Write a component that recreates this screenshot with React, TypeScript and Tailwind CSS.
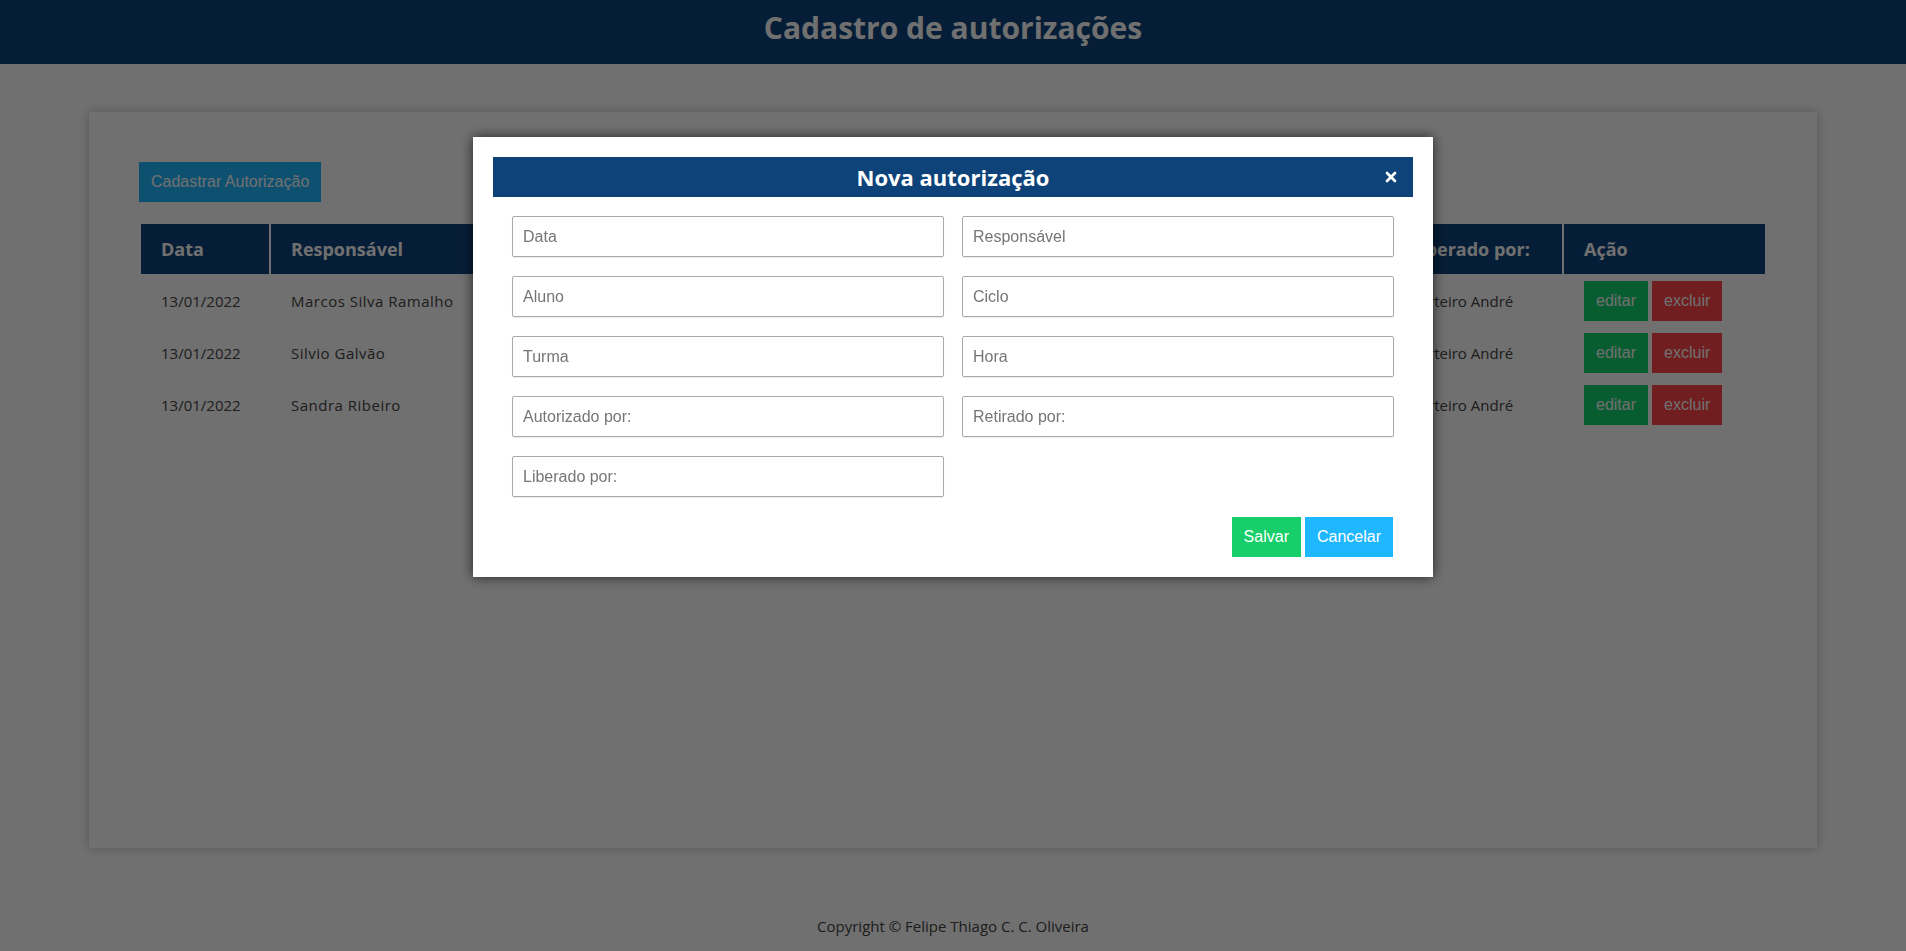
import { X } from "lucide-react";

const rows = [
  { data: "13/01/2022", responsavel: "Marcos Silva Ramalho" },
  { data: "13/01/2022", responsavel: "Silvio Galvão" },
  { data: "13/01/2022", responsavel: "Sandra Ribeiro" },
];

const campos = [
  "Data",
  "Responsável",
  "Aluno",
  "Ciclo",
  "Turma",
  "Hora",
  "Autorizado por:",
  "Retirado por:",
  "Liberado por:",
];

const App: React.FC = () => {
  return (
    <div className="min-h-screen bg-white font-['Open_Sans',sans-serif] text-[#444]">
      {/* Top bar */}
      <header className="h-16 pb-[10px] bg-[#0d437b] flex items-center justify-center">
        <h1 className="text-white text-[30px] font-bold">Cadastro de autorizações</h1>
      </header>

      {/* Card */}
      <main className="mx-[89px] mt-12 h-[736px] bg-white shadow-[0_0_10px_rgba(0,0,0,0.25)] p-[50px]">
        <button className="h-10 px-[12px] bg-[#1fb7ff] text-white text-base font-['Liberation_Sans',sans-serif]">
          Cadastrar Autorização
        </button>

        <table className="w-full mt-5 table-fixed border-separate border-spacing-[2px] text-[15px]">
          <thead>
            <tr className="h-[50px] bg-[#0d437b] text-white text-lg font-bold text-left whitespace-nowrap">
              <th className="w-[128px] pl-5">Data</th>
              <th className="w-[240px] pl-5">Responsável</th>
              <th className="w-[120px] pl-5">Aluno</th>
              <th className="w-[120px] pl-5">Ciclo</th>
              <th className="w-[120px] pl-5">Turma</th>
              <th className="w-[120px] pl-5">Hora</th>
              <th className="pl-5">Autorizado por:</th>
              <th className="pl-5">Retirado por:</th>
              <th className="w-[172px] pl-5">Liberado por:</th>
              <th className="w-[201px] pl-5">Ação</th>
            </tr>
          </thead>
          <tbody>
            {rows.map((r, i) => (
              <tr key={i} className="h-[50px] whitespace-nowrap">
                <td className="pl-5">{r.data}</td>
                <td className="pl-5 tracking-[0.5px]">{r.responsavel}</td>
                <td className="pl-5">João</td>
                <td className="pl-5">1º</td>
                <td className="pl-5">A</td>
                <td className="pl-5">12:00</td>
                <td className="pl-5">Diretora</td>
                <td className="pl-5">Pai</td>
                <td className="pl-5">Porteiro André</td>
                <td className="pl-5">
                  <div className="flex gap-1 font-['Liberation_Sans',sans-serif] text-base">
                    <button className="h-10 px-3 bg-[#14d36d] text-white">editar</button>
                    <button className="h-10 px-3 bg-[#ff4649] text-white">excluir</button>
                  </div>
                </td>
              </tr>
            ))}
          </tbody>
        </table>
      </main>

      <footer className="mt-[66px] text-center text-[15px] leading-6">
        Copyright © Felipe Thiago C. C. Oliveira
      </footer>

      {/* Modal overlay */}
      <div className="fixed inset-0 bg-black/[0.56] flex justify-center items-start pt-[137px]">
        <div className="w-[960px] bg-white p-5 shadow-[0_0_12px_rgba(0,0,0,0.7)]">
          <div className="relative h-10 bg-[#0e437a] flex items-center justify-center">
            <h2 className="text-white text-[22px] font-bold">Nova autorização</h2>
            <button className="absolute right-[14px] top-1/2 -translate-y-1/2 text-white">
              <X size={16} strokeWidth={4} />
            </button>
          </div>

          <div className="px-[19px] pt-[19px] grid grid-cols-2 gap-x-[18px] gap-y-[19px] font-['Liberation_Sans',sans-serif]">
            {campos.map((c) => (
              <input
                key={c}
                placeholder={c}
                className="h-[41px] w-full border border-[#a9a9a9] rounded-[2px] px-[10px] text-base text-[#333] placeholder:text-[#757575] shadow-[0_1px_1px_rgba(0,0,0,0.08)] outline-none"
              />
            ))}
          </div>

          <div className="flex justify-end gap-1 pr-5 pt-5 font-['Liberation_Sans',sans-serif] text-base">
            <button className="h-10 px-3 bg-[#16cf6a] text-white">Salvar</button>
            <button className="h-10 px-3 bg-[#1fb7ff] text-white">Cancelar</button>
          </div>
        </div>
      </div>
    </div>
  );
};

export default App;
